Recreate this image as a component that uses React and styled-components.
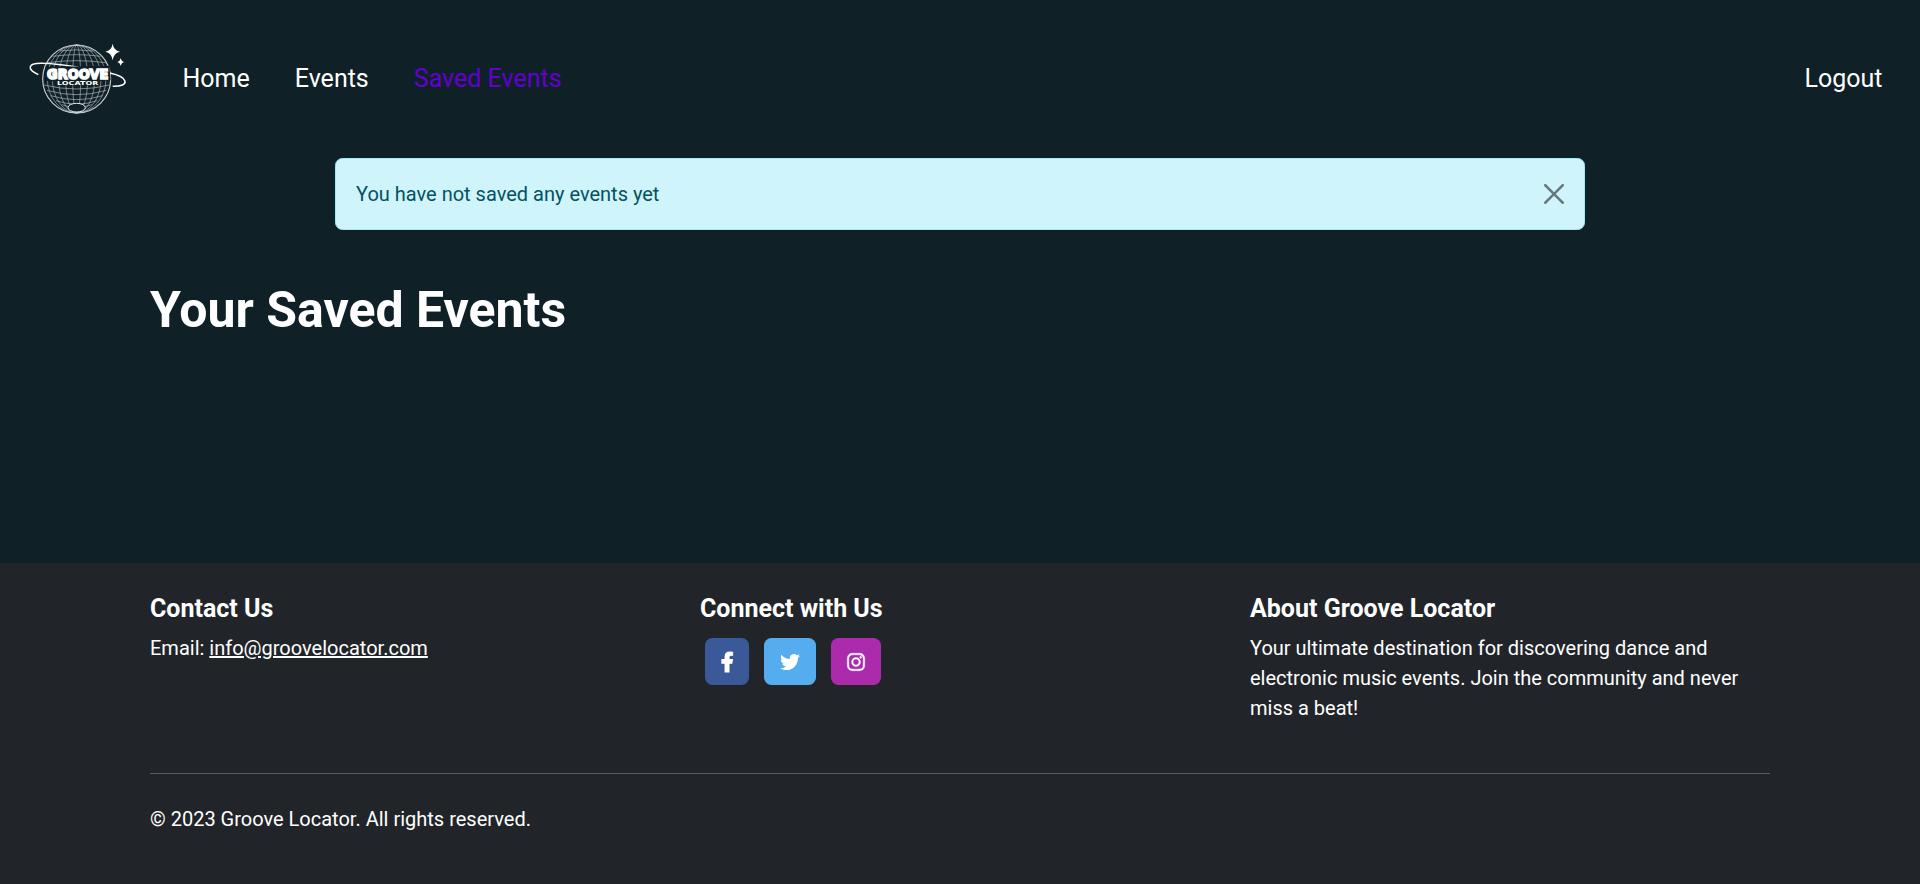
import React from "react";
import styled, { createGlobalStyle } from "styled-components";
import { FaFacebookF, FaTwitter, FaInstagram } from "react-icons/fa";

const GlobalStyle = createGlobalStyle`
  *, *::before, *::after { box-sizing: border-box; }
  body {
    margin: 0;
    background: #102027;
    color: #fff;
    font-family: Roboto, "Liberation Sans", sans-serif;
    font-size: 20px;
    line-height: 1.5;
  }
`;

const Page = styled.div`
  min-height: 884px;
  display: flex;
  flex-direction: column;
`;

const Navbar = styled.nav`
  height: 158px;
  padding: 0 37.5px 0 20px;
  display: flex;
  align-items: center;
`;

const Brand = styled.a`
  display: flex;
  padding-top: 2px;
  margin-right: 47.5px;
`;

const NavLinks = styled.div`
  flex: 1;
  display: flex;
  gap: 45px;
`;

const NavLink = styled.a`
  color: ${(p) => (p.$active ? "#6200d1" : "#fff")};
  font-size: 25px;
  text-decoration: none;
`;

const Alert = styled.div`
  width: 1250px;
  margin: 0 auto;
  padding: 20px;
  display: flex;
  align-items: center;
  justify-content: space-between;
  border: 1px solid #9eeaf9;
  border-radius: 7.5px;
  background: #cff4fc;
  color: #055160;
`;

const CloseButton = styled.button`
  display: flex;
  padding: 0;
  border: 0;
  background: none;
  color: #000;
  opacity: 0.5;
`;

const Container = styled.div`
  width: 1650px;
  margin: 0 auto;
  padding: 0 15px;
`;

const Title = styled.h1`
  margin: 50px 0 0;
  font-size: 50px;
  font-weight: 700;
  line-height: 1.2;
`;

const Footer = styled.footer`
  margin-top: auto;
  padding: 31px 0 50px;
  background: #212529;
`;

const Columns = styled.div`
  display: grid;
  grid-template-columns: repeat(3, 1fr);
  column-gap: 30px;
  padding-bottom: 50px;
  border-bottom: 1px solid #585b5e;
`;

const ColumnTitle = styled.h5`
  margin: 0 0 9px;
  font-size: 25px;
  font-weight: 700;
  line-height: 1.2;
`;

const Text = styled.p`
  margin: 0;
`;

const MailLink = styled.a`
  color: #fff;
`;

const Socials = styled.div`
  display: flex;
  gap: 15px;
  padding: 5px 5px 0;
`;

const SocialButton = styled.a`
  width: ${(p) => p.$width}px;
  height: 47px;
  display: flex;
  align-items: center;
  justify-content: center;
  border-radius: 7.5px;
  background: ${(p) => p.$color};
  color: #fff;

  svg {
    width: ${(p) => p.$icon}px;
    height: 20px;
    overflow: visible;
    stroke-width: ${(p) => p.$stroke || 0}px;
  }
`;

const Copyright = styled.p`
  margin: 30px 0 0;
`;

const meridians = [12, 33, 54, 73, 88];
const parallels = [
  [48, 50, 7],
  [64, 72, 10],
  [83, 87, 12],
  [150, 98, 24],
  [166, 89, 26],
  [182, 78, 24],
  [197, 62, 21],
  [209, 45, 17],
];

function Logo() {
  return (
    <svg width="115" height="90" viewBox="0 0 345 270" fill="none">
      <g stroke="#c6cdd0" strokeWidth="2.2">
        <circle cx="170" cy="132" r="102" strokeWidth="3.5" />
        {meridians.map((rx) => (
          <ellipse key={rx} cx="170" cy="132" rx={rx} ry="102" strokeOpacity=".75" />
        ))}
        {parallels.map(([y, rx, ry]) => (
          <path
            key={y}
            strokeOpacity=".8"
            d={`M${170 - rx} ${y}Q170 ${y + (y < 120 ? -ry : ry)} ${170 + rx} ${y}`}
          />
        ))}
      </g>
      <ellipse cx="170" cy="218" rx="26" ry="13" fill="#102027" stroke="#e4e8ea" strokeWidth="3" />
      <path
        d="M55 119C20 103 22 84 66 85Q112 86 175 97M269 114C326 126 332 155 278 154"
        stroke="#fff"
        strokeWidth="4.5"
      />
      <path d="M76 96L268 92L272 136L238 138L236 151L109 151L108 139L76 138Z" fill="#102027" />
      <text
        x="81"
        y="132"
        textLength="184"
        lengthAdjust="spacingAndGlyphs"
        fill="#fff"
        stroke="#fff"
        strokeWidth="5"
        strokeLinejoin="miter"
        fontFamily='"DejaVu Sans", sans-serif'
        fontWeight="700"
        fontSize="43"
      >
        GROOVE
      </text>
      <text
        x="111"
        y="149"
        textLength="124"
        lengthAdjust="spacingAndGlyphs"
        fill="#fff"
        fontFamily='"DejaVu Sans", sans-serif'
        fontWeight="700"
        fontSize="16"
      >
        LOCATOR
      </text>
      <path
        d="M278 26Q281 46 300 50Q281 54 278 76Q275 54 256 50Q275 46 278 26ZM302 70Q304 79 312 81Q304 83 302 92Q300 83 292 81Q300 79 302 70Z"
        fill="#fff"
      />
    </svg>
  );
}

export default function App() {
  return (
    <Page>
      <GlobalStyle />
      <Navbar>
        <Brand aria-label="Groove Locator">
          <Logo />
        </Brand>
        <NavLinks>
          <NavLink>Home</NavLink>
          <NavLink>Events</NavLink>
          <NavLink $active>Saved Events</NavLink>
        </NavLinks>
        <NavLink>Logout</NavLink>
      </Navbar>
      <Alert role="alert">
        You have not saved any events yet
        <CloseButton aria-label="Close">
          <svg width="20" height="20" viewBox="0 0 16 16" fill="currentColor">
            <path d="M.293.293a1 1 0 0 1 1.414 0L8 6.586 14.293.293a1 1 0 1 1 1.414 1.414L9.414 8l6.293 6.293a1 1 0 0 1-1.414 1.414L8 9.414l-6.293 6.293a1 1 0 0 1-1.414-1.414L6.586 8 .293 1.707a1 1 0 0 1 0-1.414z" />
          </svg>
        </CloseButton>
      </Alert>
      <Container>
        <Title>Your Saved Events</Title>
      </Container>
      <Footer>
        <Container>
          <Columns>
            <div>
              <ColumnTitle>Contact Us</ColumnTitle>
              <Text>
                Email: <MailLink href="mailto:info@groovelocator.com">info@groovelocator.com</MailLink>
              </Text>
            </div>
            <div>
              <ColumnTitle>Connect with Us</ColumnTitle>
              <Socials>
                <SocialButton $color="#3b5998" $width={44} $icon={12.5} $stroke={26} aria-label="Facebook">
                  <FaFacebookF />
                </SocialButton>
                <SocialButton $color="#55acee" $width={52} $icon={20} aria-label="Twitter">
                  <FaTwitter />
                </SocialButton>
                <SocialButton $color="#ac2bac" $width={50} $icon={20} $stroke={10} aria-label="Instagram">
                  <FaInstagram />
                </SocialButton>
              </Socials>
            </div>
            <div>
              <ColumnTitle>About Groove Locator</ColumnTitle>
              <Text>
                Your ultimate destination for discovering dance and electronic music events. Join the
                community and never miss a beat!
              </Text>
            </div>
          </Columns>
          <Copyright>© 2023 Groove Locator. All rights reserved.</Copyright>
        </Container>
      </Footer>
    </Page>
  );
}
